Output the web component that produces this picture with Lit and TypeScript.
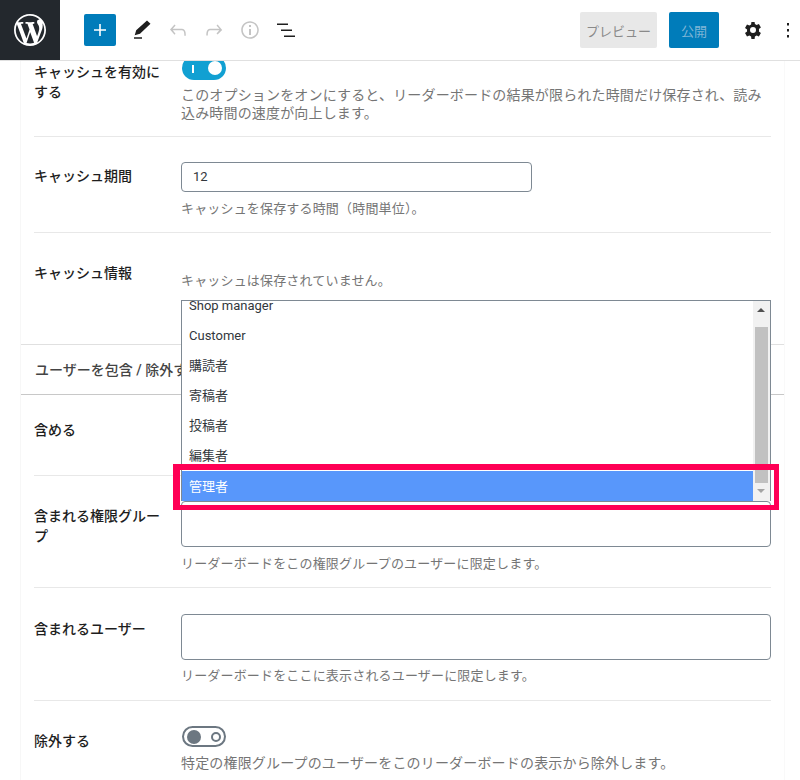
import { LitElement, html, css } from "lit";
import { customElement } from "lit/decorators.js";

const ROLES = ["Customer", "購読者", "寄稿者", "投稿者", "編集者"];

@customElement("app-root")
export class AppRoot extends LitElement {
  static styles = css`
    :host { display: block; width: 800px; height: 780px; overflow: hidden; position: relative; background: #fff;
      font-family: Roboto, "Noto Sans CJK JP", sans-serif; font-size: 13px; color: #1e1e1e; }
    * { box-sizing: border-box; }
    .bar { height: 61px; display: flex; align-items: center; border-bottom: 1px solid #e0e0e0; background: #fff; position: relative; z-index: 2; }
    .logo { width: 60px; height: 60px; background: #23282d; display: flex; align-items: center; justify-content: center; flex: none; }
    .add { width: 32px; height: 32px; margin-left: 24px; background: #007cba; border-radius: 2px; display: flex; align-items: center; justify-content: center; }
    .tool { width: 24px; height: 24px; margin-left: 12px; flex: none; display: block; }
    .tool.pen { margin-left: 14px; }
    .spacer { flex: 1; }
    .preview { width: 77px; height: 36px; background: #e8e8e8; color: #8a8a8a; border-radius: 2px; display: flex; align-items: center; justify-content: center; }
    .publish { width: 50px; height: 36px; margin-left: 12px; background: #007cba; color: #7fb5d6; border-radius: 2px; display: flex; align-items: center; justify-content: center; }
    .gear { margin-left: 22px; width: 24px; height: 24px; }
    .dots { margin-left: 10px; margin-right: 5px; width: 20px; height: 24px; }
    .main { height: 719px; overflow: hidden; }
    .panel { margin: -36px 15px 0 20px; border-left: 1px solid #f7f7f7; border-right: 1px solid #f9f9f9; }
    .row { display: flex; margin: 0 13px; border-bottom: 1px solid #e8e8e8; }
    .label { width: 147px; flex: none; padding-right: 19px; font-weight: 500; line-height: 19.6px; font-size: 14px; color: #1e1e1e; }
    .field { flex: 1; min-width: 0; }
    .desc { color: #757575; font-size: 13px; line-height: 18.2px; letter-spacing: .17px; }
    .desc.big { font-size: 14px; }
    .toggle { width: 44px; height: 24px; margin-left: 1px; border-radius: 12px; position: relative; }
    .toggle.on { background: #11a0d2; }
    .toggle.off { height: 21px; border: 2px solid #6c7781; background: #fff; }
    .knob { position: absolute; width: 14px; height: 14px; border-radius: 50%; }
    .on .knob { right: 4px; top: 5px; background: #fff; }
    .bar-i { position: absolute; left: 10px; top: 9px; width: 2px; height: 8px; background: #fff; }
    .off .knob { left: 3px; top: 1.5px; background: #6c7781; }
    .ring { position: absolute; right: 3px; top: 3.5px; width: 10px; height: 10px; border: 2px solid #6c7781; border-radius: 50%; }
    .input { width: 351px; height: 30px; border: 1px solid #7e8993; border-radius: 4px; padding: 0 8px 0 11px; line-height: 28px; color: #32373c; }
    .box { width: 100%; height: 46px; border: 1px solid #7e8993; border-radius: 4px; background: #fff; }
    .r1 { height: 112px; }
    .r1 .label { padding-top: 38px; }
    .r1 .field { padding-top: 31px; }
    .r1 .desc { margin-top: 6px; }
    .r2 { height: 96px; }
    .r2 .label { padding-top: 30px; }
    .r2 .field { padding-top: 25px; }
    .r2 .desc { margin-top: 8px; }
    .r3 { height: 111px; border-bottom: none; }
    .r3 .label { padding-top: 31px; }
    .r3 .field { padding-top: 39px; }
    .section { height: 51px; padding: 0 0 2px 14px; display: flex; align-items: center; font-size: 14px; font-weight: 500; color: #444; border-top: 1px solid #e0e0e0; border-bottom: 1px solid #c8c8c8; }
    .r4 { height: 81px; }
    .r4 .label { padding-top: 26px; }
    .r5 { height: 112px; }
    .r5 .label { padding-top: 31px; }
    .r5 .field { padding-top: 25px; }
    .r5 .desc { margin-top: 8px; }
    .r6 { height: 113px; }
    .r6 .label { padding-top: 32px; }
    .r6 .field { padding-top: 26px; }
    .r6 .desc { margin-top: 7px; }
    .r7 { height: 80px; border-bottom: none; }
    .r7 .label { padding-top: 31px; }
    .r7 .field { padding-top: 25px; }
    .r7 .desc { margin-top: 7px; }
    .list { position: absolute; left: 181px; top: 300px; width: 590px; height: 201px; background: #fff; border: 1px solid #7e8993; border-bottom: none; z-index: 1; overflow: hidden; display: flex; }
    .items { flex: 1; min-width: 0; }
    .opt { height: 30px; padding-left: 7px; line-height: 30px; color: #32373c; }
    .opt.first { height: 19.5px; line-height: 10px; }
    .opt.sel { background: #5897fb; color: #fff; margin-top: .5px; line-height: 32px; }
    .scroll { width: 17px; background: #f1f1f1; position: relative; flex: none; }
    .thumb { position: absolute; left: 2px; top: 26px; width: 13px; height: 156px; background: #c1c1c1; }
    .up { position: absolute; left: 4px; top: 7px; width: 0; height: 0; border: 4px solid transparent; border-top: none; border-bottom: 4px solid #505050; }
    .down { position: absolute; left: 4px; top: 188px; width: 0; height: 0; border: 4px solid transparent; border-bottom: none; border-top: 4px solid #a3a3a3; }
    .hl { position: absolute; left: 173px; top: 464px; width: 606px; height: 46px; border: solid #ff0055; border-width: 6px 5px 5px 7px; z-index: 3; }
  `;

  render() {
    return html`
      <div class="bar">
        <div class="logo">
          <svg width="32" height="32" viewBox="0 0 20 20" fill="#fff"><path d="M20 10c0-5.51-4.49-10-10-10C4.480 0 0 4.490 0 10c0 5.520 4.480 10 10 10 5.510 0 10-4.480 10-10zM7.780 15.370L4.370 6.220c.55-.02 1.170-.08 1.170-.08.500-.06.440-1.130-.06-1.110 0 0-1.450.11-2.370.11-.18 0-.37 0-.58-.01C4.120 2.690 6.890 1.100 10 1.100c2.320 0 4.430.88 6.020 2.330-.67-.110-1.630.39-1.630 1.510 0 .69.4 1.270.83 1.970.33.570.53 1.270.53 2.300 0 1.390-1.310 4.660-1.310 4.660l-2.780-7.660c.49-.03.79-.16.79-.16.5-.05.44-1.110-.06-1.080 0 0-1.510.11-2.480.11-.9 0-2.410-.11-2.410-.11-.5-.03-.55 1.060-.05 1.080l.95.09 1.300 3.550-1.820 5.480zM17.410 10c.24-.64.74-1.870.43-4.250.7 1.290 1.050 2.710 1.050 4.250 0 3.290-1.730 6.240-4.400 7.780.97-2.590 1.940-5.200 2.920-7.780zM6.100 18.090C3.120 16.650 1.110 13.530 1.110 10c0-1.300.23-2.480.72-3.590C3.250 10.300 4.670 14.200 6.100 18.090zm4.030-6.630l2.360 6.380c.01.040.03.080.05.110-.8.280-1.650.43-2.540.43-.75 0-1.470-.11-2.150-.31.780-2.260 1.530-4.410 2.280-6.610z"/></svg>
        </div>
        <div class="add"><svg width="24" height="24" viewBox="0 0 24 24" fill="#fff"><path d="M18 11.200h-5.200V6h-1.600v5.200H6v1.600h5.200V18h1.600v-5.200H18z"/></svg></div>
        <svg class="tool pen" viewBox="0 0 24 24" fill="#1e1e1e"><path d="M20.500 5.800L17 2.600 6.200 12.300l-1.500 5 5.300-1.500L20.500 5.800zM4 20.800h8v-1.500H4v1.500z"/></svg>
        <svg class="tool" viewBox="0 0 24 24" fill="#c4c4c4"><path d="M18.300 11.700c-.6-.6-1.400-.9-2.300-.9H6.700l2.900-3.300-1.100-1-4.500 5L8.500 16.700l1-1-2.700-3.400H16c.5 0 .9.200 1.300.5 1 1 1 3.400 1 4.500v.5h1.500v-.5c0-1.500 0-4.300-1.500-5.600z"/></svg>
        <svg class="tool" viewBox="0 0 24 24" fill="#c4c4c4"><path d="M15.600 6.500l-1.100 1 2.900 3.300H8c-.9 0-1.700.3-2.300.9-1.400 1.500-1.400 4.200-1.400 5.600v.2h1.500v-.3c0-1.100 0-3.500 1-4.500.3-.3.700-.5 1.300-.5h9.200L14.500 15.500l1.100 1.100 4.600-4.600-4.600-5.500z"/></svg>
        <svg class="tool" viewBox="0 0 24 24" fill="#c4c4c4"><path d="M12 3.200c-4.800 0-8.800 3.900-8.800 8.800 0 4.800 3.900 8.800 8.800 8.800 4.800 0 8.800-3.900 8.800-8.800 0-4.800-4-8.800-8.800-8.800zm0 16c-4 0-7.200-3.300-7.200-7.300S8 4.700 12 4.700s7.300 3.300 7.300 7.300-3.300 7.200-7.300 7.200zM11 17h2v-6h-2v6zm0-8h2V7h-2v2z"/></svg>
        <svg class="tool" viewBox="0 0 24 24" fill="#1e1e1e"><path d="M3 7h11V5.500H3V7zm4 6h11v-1.500H7V13zm3 6h11v-1.500H10V19z"/></svg>
        <div class="spacer"></div>
        <div class="preview">プレビュー</div>
        <div class="publish">公開</div>
        <svg class="gear" viewBox="0 0 24 24" fill="#1e1e1e"><path fill-rule="evenodd" d="M18 12c0-.3 0-.7-.1-1l2-1.500-2-3.500-2.300 1a6 6 0 0 0-1.700-1L13.600 4h-3.200l-.3 2.500c-.6.300-1.200.6-1.700 1L6 6.500 4 10l2.100 1.500a6 6 0 0 0 0 2L4 15l2 3.500 2.400-1c.5.400 1.100.7 1.700 1l.3 2.500h3.200l.3-2.500c.6-.3 1.200-.6 1.700-1l2.300 1 2-3.500-2-1.500c.1-.3.100-.7.100-1zm-6 3a3 3 0 1 1 0-6 3 3 0 0 1 0 6z"/></svg>
        <svg class="dots" viewBox="0 0 20 24" fill="#1e1e1e"><rect x="12" y="5" width="2" height="2.500"/><rect x="12" y="11" width="2" height="2.500"/><rect x="12" y="17" width="2" height="2.500"/></svg>
      </div>
      <div class="main">
        <div class="panel">
          <div class="row r1">
            <div class="label">キャッシュを有効にする</div>
            <div class="field">
              <div class="toggle on"><span class="bar-i"></span><span class="knob"></span></div>
              <div class="desc big">このオプションをオンにすると、リーダーボードの結果が限られた時間だけ保存され、読み込み時間の速度が向上します。</div>
            </div>
          </div>
          <div class="row r2">
            <div class="label">キャッシュ期間</div>
            <div class="field">
              <div class="input">12</div>
              <div class="desc">キャッシュを保存する時間（時間単位）。</div>
            </div>
          </div>
          <div class="row r3">
            <div class="label">キャッシュ情報</div>
            <div class="field"><div class="desc">キャッシュは保存されていません。</div></div>
          </div>
          <div class="section">ユーザーを包含 / 除外する</div>
          <div class="row r4"><div class="label">含める</div><div class="field"></div></div>
          <div class="row r5">
            <div class="label">含まれる権限グループ</div>
            <div class="field">
              <div class="box"></div>
              <div class="desc">リーダーボードをこの権限グループのユーザーに限定します。</div>
            </div>
          </div>
          <div class="row r6">
            <div class="label">含まれるユーザー</div>
            <div class="field">
              <div class="box"></div>
              <div class="desc">リーダーボードをここに表示されるユーザーに限定します。</div>
            </div>
          </div>
          <div class="row r7">
            <div class="label">除外する</div>
            <div class="field">
              <div class="toggle off"><span class="knob"></span><span class="ring"></span></div>
              <div class="desc big">特定の権限グループのユーザーをこのリーダーボードの表示から除外します。</div>
            </div>
          </div>
        </div>
      </div>
      <div class="list">
        <div class="items">
          <div class="opt first">Shop manager</div>
          ${ROLES.map((r) => html`<div class="opt">${r}</div>`)}
          <div class="opt sel">管理者</div>
        </div>
        <div class="scroll"><span class="up"></span><span class="thumb"></span><span class="down"></span></div>
      </div>
      <div class="hl"></div>
    `;
  }
}
